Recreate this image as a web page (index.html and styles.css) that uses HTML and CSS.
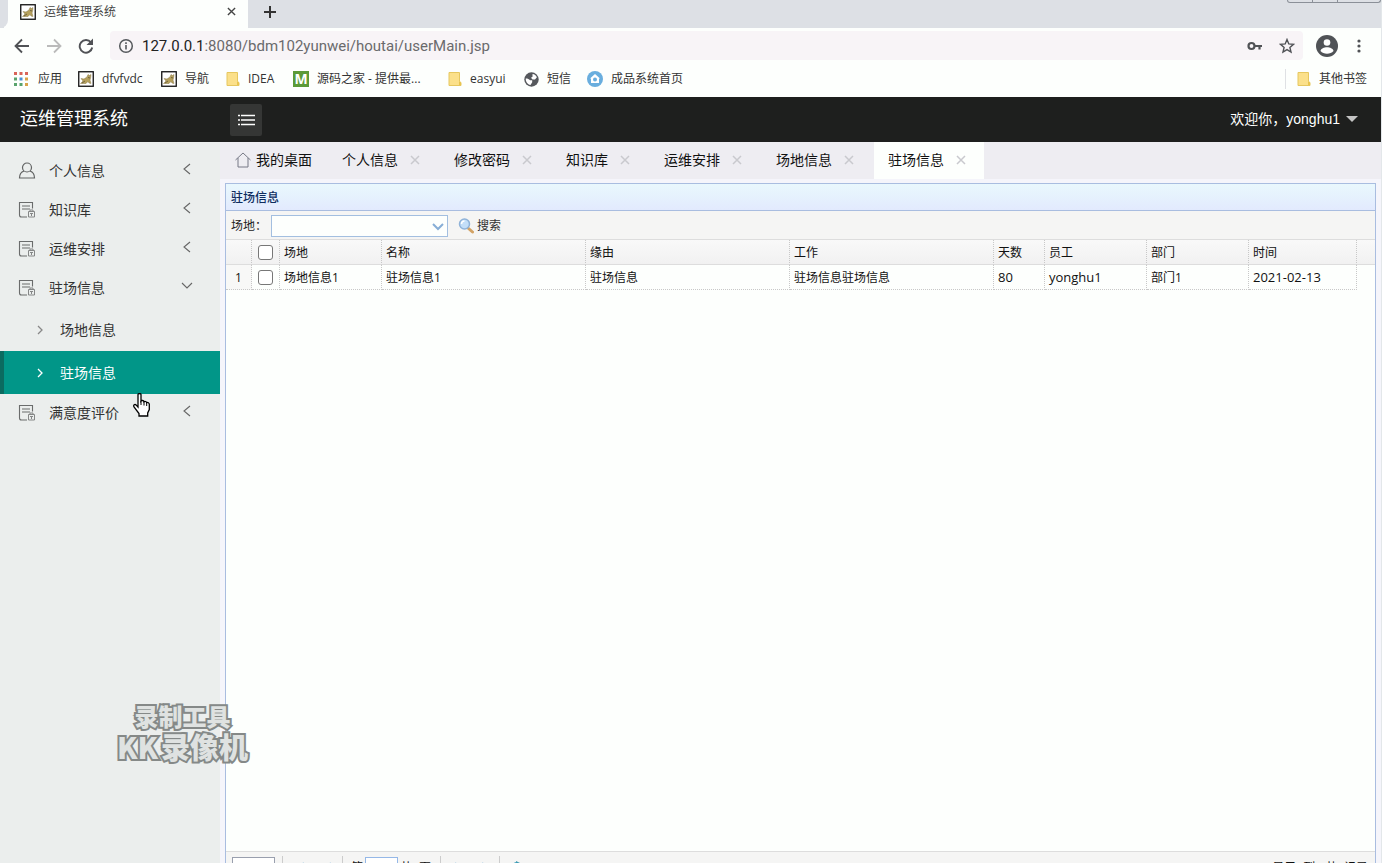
FILE: index.html
```html
<!DOCTYPE html>
<html lang="zh-CN">
<head>
<meta charset="utf-8">
<title>运维管理系统</title>
<link rel="stylesheet" href="styles.css">
</head>
<body>
<svg class="defs" aria-hidden="true">
  <symbol id="cat" viewBox="0 0 16 16"><rect x=".75" y=".75" width="14.5" height="14.5" fill="#fff" stroke="#111" stroke-width="1.3"/><path d="M2.500 12.500L5 10 3 7.500l3 .5 3-2 1-2.500 1.500 1 1.500-1-.5 4L12 9l1 3.500-2-.5-1-1.500-2 2z" fill="#b5a05c" stroke="#8a7a4a" stroke-width=".5"/><path d="M4 12l3-2M10 6.500l2 .5" stroke="#5f5536" stroke-width=".8"/></symbol>
  <symbol id="folder" viewBox="0 0 14 16"><path d="M1 1.500h10.500v9l1.500 1v3H1z" fill="#fbe08a" stroke="#e6c75f"/><path d="M11 14v-3.500l2 1v2.500z" fill="#e9c44f"/></symbol>
  <symbol id="doc" viewBox="0 0 18 18"><path d="M14.500 7.500V1.500H1.500v12.500a2 2 0 0 0 2 2H9M4 5h8M4 8h8" fill="none" stroke="#6a6c6c" stroke-width="1.100"/><path d="M10.500 10.500h6v5.500h-6zM12 10.500v-1.500h3v1.500M12 12.500h3M13.500 12.500V15" fill="none" stroke="#858787"/></symbol>
  <symbol id="left" viewBox="0 0 10 12"><path d="M8 1L2 6l6 5" fill="none" stroke="#666" stroke-width="1.100"/></symbol>
  <symbol id="down" viewBox="0 0 12 10"><path d="M1 2l5 5 5-5" fill="none" stroke="#666" stroke-width="1.100"/></symbol>
  <symbol id="right" viewBox="0 0 8 10"><path d="M2 1l4 4-4 4" fill="none" stroke="currentColor" stroke-width="1.300"/></symbol>
  <symbol id="x" viewBox="0 0 10 10"><path d="M1 1l8 8M9 1L1 9" fill="none" stroke="currentColor" stroke-width="1.500"/></symbol>
</svg>

<header class="browser">
  <div class="tabstrip">
    <div class="previous-tab"></div>
    <div class="browser-tab">
      <svg class="i16"><use href="#cat"/></svg><span>运维管理系统</span>
      <button class="tab-close" aria-label="关闭标签页"><svg class="i9"><use href="#x"/></svg></button>
    </div>
    <button class="new-tab" aria-label="新标签页"><svg width="14" height="14" viewBox="0 0 14 14"><path d="M7 1v12M1 7h12" stroke="#333" stroke-width="2"/></svg></button>
    <div class="window-controls"><i></i><i></i><i></i></div>
  </div>
  <div class="navigation">
    <button aria-label="后退"><svg width="16" height="16" viewBox="0 0 16 16"><path d="M15 8H2M8 1.500L1.500 8 8 14.500" fill="none" stroke="#505256" stroke-width="1.800"/></svg></button>
    <button aria-label="前进"><svg width="16" height="16" viewBox="0 0 16 16"><path d="M1 8h13M8 1.500L14.500 8 8 14.500" fill="none" stroke="#bbb" stroke-width="1.800"/></svg></button>
    <button aria-label="刷新"><svg width="16" height="16" viewBox="0 0 16 16"><path d="M13 4.500A6.300 6.300 0 1 0 14.200 9.500" fill="none" stroke="#505256" stroke-width="1.900"/><path d="M15 .5v6.500H8.500z" fill="#505256"/></svg></button>
    <div class="address">
      <svg width="16" height="16" viewBox="0 0 16 16"><circle cx="8" cy="8" r="6.300" fill="none" stroke="#55585c" stroke-width="1.500"/><path d="M8 7v4.500M8 4.300V6" stroke="#55585c" stroke-width="1.600"/></svg>
      <span class="url"><b>127.0.0.1</b>:8080/bdm102yunwei/houtai/userMain.jsp</span>
      <button aria-label="密码"><svg width="16" height="12" viewBox="0 0 16 12"><circle cx="4.500" cy="6" r="3" fill="none" stroke="#505256" stroke-width="2.200"/><path d="M7 6h8M12.500 6v3.500" fill="none" stroke="#505256" stroke-width="2.200"/></svg></button>
      <button aria-label="收藏"><svg width="16" height="16" viewBox="0 0 16 16"><path d="M8 1.500l1.800 4.400 4.700.4-3.600 3.100 1.100 4.700L8 11.600l-4 2.500 1.100-4.700L1.500 6.300l4.700-.4z" fill="none" stroke="#505256" stroke-width="1.400"/></svg></button>
    </div>
    <button class="account" aria-label="用户"><svg width="22" height="22" viewBox="0 0 22 22"><circle cx="11" cy="11" r="11" fill="#505357"/><circle cx="11" cy="7.500" r="3.300" fill="#fff"/><path d="M4.500 16c1-5 12-5 13 0-3 3.700-10 3.700-13 0z" fill="#fff"/></svg></button>
    <button class="more" aria-label="更多"><svg width="4" height="14" viewBox="0 0 4 14"><g fill="#505256"><circle cx="2" cy="2" r="1.600"/><circle cx="2" cy="7" r="1.600"/><circle cx="2" cy="12" r="1.600"/></g></svg></button>
  </div>
  <nav class="bookmarks">
    <a href="#" class="apps"><svg width="14" height="14" viewBox="0 0 14 14"><path d="M0 0h3v3H0zM5.500 0h3v3h-3zM11 0h3v3h-3z" fill="#d96459"/><path d="M0 5.500h3v3H0z" fill="#5aa36b"/><path d="M5.500 5.500h3v3h-3z" fill="#4b8fd5"/><path d="M11 5.500h3v3h-3z" fill="#d9a248"/><path d="M0 11h3v3H0zM5.500 11h3v3h-3z" fill="#59a36c"/><path d="M11 11h3v3h-3z" fill="#d9a248"/></svg>应用</a>
    <a href="#" class="cat-a"><svg class="i16"><use href="#cat"/></svg>dfvfvdc</a>
    <a href="#" class="cat-b"><svg class="i16"><use href="#cat"/></svg>导航</a>
    <a href="#" class="idea"><svg class="folder"><use href="#folder"/></svg>IDEA</a>
    <a href="#" class="source"><span class="m-logo">M</span>源码之家 - 提供最...</a>
    <a href="#" class="easyui"><svg class="folder"><use href="#folder"/></svg>easyui</a>
    <a href="#" class="sms"><svg width="15" height="15" viewBox="0 0 15 15"><circle cx="7.500" cy="7.500" r="7.200" fill="#55585c"/><path d="M1.800 6.500c2 0 3.200.5 4.200 1.800h2.200v2L6.500 13C3.500 12.500 1.500 9.800 1.800 6.500zM8.500 2c2 .2 3.600 1.500 4.400 3.300L11 7.500H8.500L7 5.800l1.500-1z" fill="#fff"/></svg>短信</a>
    <a href="#" class="finished"><svg width="16" height="16" viewBox="0 0 16 16"><circle cx="8" cy="8" r="8" fill="#69aede"/><path d="M8 3l5 4.500h-1V12H4V7.500H3z" fill="#fff"/><circle cx="8" cy="8.500" r="2" fill="#69aede"/></svg>成品系统首页</a>
    <a href="#" class="other"><svg class="folder"><use href="#folder"/></svg>其他书签</a>
  </nav>
</header>

<div class="app">
  <header class="app-header">
    <h1>运维管理系统</h1>
    <button class="toggle" aria-label="折叠菜单"><svg width="18" height="12" viewBox="0 0 18 12"><path d="M4 1.500h14M4 6h14M4 10.500h14M1 1.500h2M1 6h2M1 10.500h2" stroke="#fff" stroke-width="1.300"/></svg></button>
    <button class="welcome">欢迎你，yonghu1<svg width="12" height="6" viewBox="0 0 12 6"><path d="M0 0h12L6 6z" fill="#c4c4c4"/></svg></button>
  </header>
  <div class="workspace">
    <nav class="sidebar">
      <a href="#"><svg class="i18" viewBox="0 0 18 18"><circle cx="9" cy="5.500" r="4.500" fill="none" stroke="#626464" stroke-width="1.200"/><path d="M6 9c-3 1-4.500 3.500-4.500 7h15c0-3.500-1.500-6-4.500-7" fill="none" stroke="#626464" stroke-width="1.200"/></svg><span>个人信息</span><svg class="arrow"><use href="#left"/></svg></a>
      <a href="#"><svg class="i18"><use href="#doc"/></svg><span>知识库</span><svg class="arrow"><use href="#left"/></svg></a>
      <a href="#"><svg class="i18"><use href="#doc"/></svg><span>运维安排</span><svg class="arrow"><use href="#left"/></svg></a>
      <a href="#"><svg class="i18"><use href="#doc"/></svg><span>驻场信息</span><svg class="arrow"><use href="#down"/></svg></a>
      <div class="submenu">
        <a href="#"><svg class="sub-arrow"><use href="#right"/></svg>场地信息</a>
        <a href="#" class="current"><svg class="sub-arrow"><use href="#right"/></svg>驻场信息</a>
      </div>
      <a href="#"><svg class="i18"><use href="#doc"/></svg><span>满意度评价</span><svg class="arrow"><use href="#left"/></svg></a>
    </nav>
    <main class="content">
      <div class="page-tabs">
        <div class="page-tab home"><svg width="16" height="16" viewBox="0 0 16 16"><path d="M.5 8L8 1l7.500 7M3 6v9h10V6" fill="none" stroke="#777986"/></svg><a href="#">我的桌面</a></div>
        <div class="page-tab"><a href="#">个人信息</a><button aria-label="关闭"><svg class="i10"><use href="#x"/></svg></button></div>
        <div class="page-tab"><a href="#">修改密码</a><button aria-label="关闭"><svg class="i10"><use href="#x"/></svg></button></div>
        <div class="page-tab"><a href="#">知识库</a><button aria-label="关闭"><svg class="i10"><use href="#x"/></svg></button></div>
        <div class="page-tab"><a href="#">运维安排</a><button aria-label="关闭"><svg class="i10"><use href="#x"/></svg></button></div>
        <div class="page-tab"><a href="#">场地信息</a><button aria-label="关闭"><svg class="i10"><use href="#x"/></svg></button></div>
        <div class="page-tab active"><a href="#">驻场信息</a><button aria-label="关闭"><svg class="i10"><use href="#x"/></svg></button></div>
      </div>
      <section class="panel">
        <h2>驻场信息</h2>
        <form class="filters">
          <label for="site">场地：</label>
          <span class="combo"><select id="site"><option></option></select><svg width="12" height="8" viewBox="0 0 12 8"><path d="M1 1l5 5 5-5" fill="none" stroke="#87aed6" stroke-width="2"/></svg></span>
          <button type="button" class="search"><svg width="16" height="16" viewBox="0 0 16 16"><path d="M10 10l4.500 4" stroke="#d3a365" stroke-width="3" stroke-linecap="round"/><circle cx="6.500" cy="6" r="5" fill="#c3def8" stroke="#8fb2d8" stroke-width="1.500"/><path d="M3.500 6a3 3 0 0 1 3-3" fill="none" stroke="#fff" stroke-width="1.500"/></svg>搜索</button>
        </form>
        <div class="grid-body">
          <table>
            <colgroup><col class="w-number"><col class="w-check"><col class="w-site"><col class="w-wide"><col class="w-wide"><col class="w-wide"><col class="w-days"><col class="w-site"><col class="w-site"><col class="w-time"><col></colgroup>
            <thead><tr><th></th><th class="check"><input type="checkbox" aria-label="全选"></th><th>场地</th><th>名称</th><th>缘由</th><th>工作</th><th>天数</th><th>员工</th><th>部门</th><th>时间</th><th class="rest"></th></tr></thead>
            <tbody><tr><td class="number">1</td><td class="check"><input type="checkbox" aria-label="选择第1行"></td><td>场地信息1</td><td>驻场信息1</td><td>驻场信息</td><td>驻场信息驻场信息</td><td class="latin">80</td><td class="latin">yonghu1</td><td>部门1</td><td class="latin">2021-02-13</td><td class="rest"></td></tr></tbody>
          </table>
        </div>
        <div class="pager">
          <select aria-label="每页条数"><option>10</option></select>
          <div class="group first"><button aria-label="首页"><svg width="12" height="14" viewBox="0 0 12 14"><path d="M1 2v10M11 2L5 7l6 5" fill="none" stroke="#a7cbe3" stroke-width="2"/></svg></button><button aria-label="上一页"><svg width="12" height="14" viewBox="0 0 12 14"><path d="M8 2L3 7l5 5" fill="none" stroke="#a7cbe3" stroke-width="2"/></svg></button></div>
          <div class="group page"><label for="page">第</label><input id="page" value="1"><span>共1页</span></div>
          <div class="group next"><button aria-label="下一页"><svg width="12" height="14" viewBox="0 0 12 14"><path d="M4 2l5 5-5 5" fill="none" stroke="#a7cbe3" stroke-width="2"/></svg></button><button aria-label="末页"><svg width="12" height="14" viewBox="0 0 12 14"><path d="M11 2v10M1 2l6 5-6 5" fill="none" stroke="#a7cbe3" stroke-width="2"/></svg></button></div>
          <div class="group reload"><button aria-label="刷新列表"><svg width="14" height="14" viewBox="0 0 14 14"><path d="M12 8a5 5 0 1 1-5-6" fill="none" stroke="#3d9bb5" stroke-width="2"/><path d="M6 0l4 2-4 3z" fill="#3d9bb5"/></svg></button></div>
          <span class="summary">显示1到1,共1记录</span>
        </div>
      </section>
    </main>
  </div>
</div>
<div class="watermark"><span class="line-one">录制工具</span><span class="line-two"><span>KK</span><span>录像机</span></span></div>
<svg class="cursor" width="18" height="25" viewBox="0 0 18 25"><path d="M5 1.500c0-1.300 3-1.300 3 0V8c.5-.8 2.500-.8 3 .8.800-.8 2.300-.3 2.700.9 1-.6 2.600.1 2.600 1.600v5.200l-1.600 3.500V23H6v-2.500L1 14c-1-2 .8-3.200 2.200-1.900L5 14z" fill="#fff" stroke="#000" stroke-width="1.300"/><path d="M8 8v4M11 9v3.500M13.700 10v3" stroke="#000"/></svg>
</body>
</html>
```
FILE: styles.css
```css
* { box-sizing: border-box; }
body {
  margin: 0;
  height: 100vh;
  overflow: hidden;
  display: flex;
  flex-direction: column;
  border-right: 1px solid #e3e7ea;
  background: #fdfffd;
  color: #111;
  font-family: "Open Sans", "Noto Sans CJK SC", sans-serif;
  font-size: 12px;
  line-height: 20px;
}
a { color: inherit; text-decoration: none; }
button { margin: 0; padding: 0; border: 0; background: none; color: inherit; font: inherit; display: flex; align-items: center; }
svg { display: block; flex: none; }
.defs { position: absolute; width: 0; height: 0; }
.i9 { width: 9px; height: 9px; }
.i10 { width: 10px; height: 10px; }
.i16 { width: 16px; height: 16px; }
.i18 { width: 18px; height: 18px; }
.folder { width: 14px; height: 16px; }

.browser { flex: none; background: #fdfffd; }
.tabstrip { display: flex; height: 28px; background: #dde0e5; }
.previous-tab { width: 8px; border-bottom-right-radius: 8px; background: #dde0e5; box-shadow: 4px 4px #fdfffd; }
.browser-tab { display: flex; align-items: center; width: 240px; padding: 0 12px 5px; gap: 8px; background: #fdfffd; color: #444; }
.tab-close { margin-left: auto; color: #444; }
.new-tab { padding: 0 15px 5px; }
.window-controls { display: flex; margin-left: auto; width: 94px; height: 3px; border: 1px solid #8b9098; border-top: 0; border-radius: 0 0 4px 4px; }
.window-controls i { width: 25px; border-right: 1px solid #8b9098; }
.window-controls i:last-child { border: 0; }
.navigation { display: flex; align-items: center; height: 35px; padding: 0 20px 0 14px; gap: 16px; }
.address { flex: 1; display: flex; align-items: center; height: 29px; padding: 0 8px; gap: 16px; border-radius: 4px; background: #f8f4f7; }
.url { flex: 1; margin-left: -8px; font-family: Roboto, sans-serif; font-size: 15px; color: #6a6a6c; }
.url b { font-weight: 400; color: #222; }
.account { margin-left: -3px; }
.more { margin-left: 3px; }
.bookmarks { display: flex; align-items: center; height: 34px; padding: 0 14px 2px; color: #333; }
.bookmarks a { display: flex; align-items: center; gap: 8px; white-space: nowrap; }
.bookmarks .apps { width: 64px; gap: 10px; }
.bookmarks .cat-a { width: 83px; }
.bookmarks .cat-b { width: 65px; }
.bookmarks .idea { width: 67px; }
.bookmarks .source { width: 155px; }
.bookmarks .easyui { width: 76px; }
.bookmarks .sms { width: 63px; }
.bookmarks .other { margin-left: auto; padding-left: 11px; border-left: 1px solid #dfe1e4; }
.m-logo { width: 16px; height: 16px; background: #5b9a38; color: #fff; font-size: 14px; font-weight: 700; line-height: 16px; text-align: center; }

.app { flex: 1; min-height: 0; display: flex; flex-direction: column; }
.app-header { flex: none; display: flex; align-items: center; height: 45px; padding: 0 23px 0 20px; background: #1e1f1e; color: #fff; }
h1 { width: 210px; margin: 0; padding-bottom: 4px; font-size: 18px; font-weight: 400; line-height: 24px; }
.toggle { justify-content: center; width: 32px; height: 32px; border-radius: 2px; background: #353635; }
.welcome { margin-left: auto; padding-bottom: 2px; gap: 6px; font-family: "Liberation Sans", "Noto Sans CJK SC", sans-serif; font-size: 14px; }
.workspace { flex: 1; min-height: 0; display: flex; }
.sidebar { flex: none; width: 220px; padding-top: 10px; background: #ebeeed; color: #333; font-size: 14px; }
.sidebar > a { display: flex; align-items: center; height: 39px; padding: 0 27px 2px 18px; gap: 13px; }
.sidebar .arrow { width: 12px; height: 12px; margin: 0 0 3px auto; }
.submenu a { display: flex; align-items: center; height: 43px; padding-left: 36px; gap: 16px; }
.submenu .current { padding-left: 32px; border-left: 4px solid #0b6b60; background: #019688; color: #fff; }
.sub-arrow { width: 8px; height: 10px; color: #888; }
.current .sub-arrow { color: #fff; }

.content { flex: 1; min-width: 0; display: flex; flex-direction: column; overflow: hidden; background: #f5f5fb; }
.page-tabs { flex: none; display: flex; height: 37px; background: #eeedf2; font-size: 14px; color: #111; }
.page-tab { display: flex; align-items: center; height: 37px; margin-right: 2px; padding: 0 18px 2px 14px; gap: 12px; }
.page-tab button { color: #c9c9ce; }
.page-tab.home { gap: 5px; padding: 0 14px 2px 15px; }
.page-tab.active { background: #fdfffd; }
.panel { flex: none; display: flex; flex-direction: column; height: calc(100% - 20px); margin: 4px 5px 0 5px; border: 1px solid #a9bde0; background: #fdfffd; }
h2 { margin: 0; height: 27px; padding-left: 5px; border-bottom: 1px solid #a9bde0; background: linear-gradient(#e9f8fd, #e2eafe); color: #0e2d5f; font-size: 12px; line-height: 27px; font-weight: 500; }
.filters { display: flex; align-items: center; height: 29px; padding: 2px 0 0 5px; border-bottom: 1px solid #ddd; background: #f5f5f4; color: #222; }
.filters label { width: 40px; }
.combo { position: relative; width: 177px; height: 22px; }
.combo select { width: 100%; height: 22px; appearance: none; border: 1px solid #a3bfe0; border-radius: 0; background: #fdfffd; }
.combo svg { position: absolute; right: 4px; top: 8px; }
.search { margin-left: 10px; gap: 3px; color: #333; }
.grid-body { flex: 1; min-height: 0; }
table { width: 100%; table-layout: fixed; border-collapse: separate; border-spacing: 0; }
.w-number { width: 26px; }
.w-check { width: 28px; }
.w-site { width: 102px; }
.w-wide { width: 204px; }
.w-days { width: 51px; }
.w-time { width: 108px; }
th, td { height: 25px; padding: 2px 4px 0; border-right: 1px dotted #c8c8c8; border-bottom: 1px dotted #c8c8c8; text-align: left; font-weight: 400; white-space: nowrap; }
th { background: linear-gradient(#f9f9f9, #f1f1f1); border-bottom: 1px solid #ddd; }
td.rest { border: 0; }
th.rest { border-right: 0; }
td.latin { padding-top: 0; font-size: 13px; }
td.number { text-align: center; background: #f8f8f7; }
th.check, td.check { padding-top: 0; }
.check input { display: block; width: 15px; height: 15px; margin: 0 auto; appearance: none; border: 1px solid #777; border-radius: 3px; background: #fff; }
.pager { flex: none; display: flex; align-items: center; height: 32px; padding: 0 7px 0 6px; border-top: 1px solid #ddd; background: #f5f5f4; }
.pager select { width: 43px; height: 22px; border: 1px solid #999fae; background: #fff; font: inherit; }
.group { display: flex; align-items: center; height: 24px; margin-left: 7px; padding-left: 10px; gap: 18px; border-left: 1px solid #ccc; }
.group.first { width: 53px; }
.group.page { width: 91px; padding-left: 8px; gap: 2px; }
.group.next { width: 52px; }
.pager input { width: 33px; height: 22px; padding: 0 4px; border: 1px solid #95b8e7; font: inherit; }
.pager span { white-space: nowrap; }
.summary { margin-left: auto; }

.watermark {
  position: absolute;
  left: 117px;
  top: 702px;
  display: flex;
  flex-direction: column;
  align-items: center;
  font-family: "Noto Sans CJK SC", sans-serif;
  font-weight: 900;
  color: #dfe2e1;
  -webkit-text-stroke: 4px #858988;
  paint-order: stroke fill;
  white-space: nowrap;
}
.line-one { font-size: 24px; line-height: 28px; }
.line-two { display: flex; gap: 3px; font-size: 29px; line-height: 32px; }
.cursor { position: absolute; left: 133px; top: 393px; }
```
